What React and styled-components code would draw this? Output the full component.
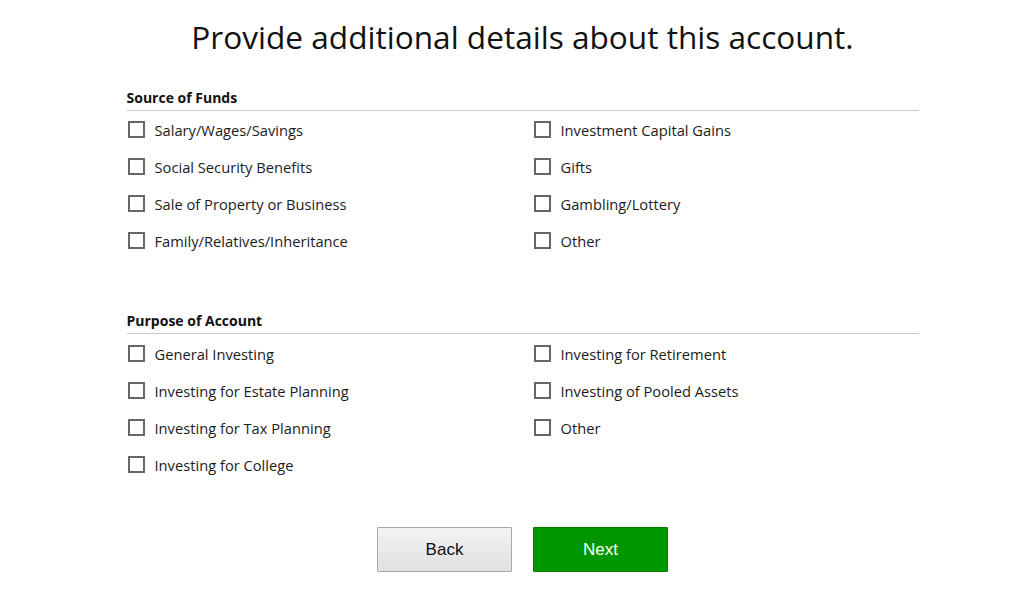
import React from "react"
import styled, { createGlobalStyle } from "styled-components"

const GlobalStyle = createGlobalStyle`
  body {
    margin: 0;
    background: #fff;
    font-family: "Open Sans", "Liberation Sans", sans-serif;
    color: #222;
  }
`

const Page = styled.div`
  width: 1033px;
  padding: 16px 0 0 12px;
  box-sizing: border-box;
  display: flex;
  flex-direction: column;
  align-items: center;
`

const Title = styled.h1`
  margin: 0;
  font-size: 31.6px;
  font-weight: 400;
  line-height: 42px;
  color: #111;
`

const Form = styled.div`
  width: 792px;
  margin-top: 30px;
`

const Section = styled.section`
  margin-bottom: ${p => p.$gap || 0}px;
`

const Heading = styled.h2`
  margin: 0;
  padding-bottom: 2px;
  font-size: 14px;
  font-weight: 700;
  line-height: 20px;
  color: #111;
  border-bottom: 1px solid #c8c8c8;
`

const Grid = styled.div`
  display: grid;
  grid-template-columns: 406px 1fr;
  grid-auto-flow: column;
  grid-template-rows: repeat(${p => p.$rows}, 37px);
  padding-top: ${p => p.$offset || 0}px;
`

const Option = styled.label`
  display: flex;
  align-items: center;
  gap: 10px;
  font-size: 14.7px;
  color: #1c1c1c;
  cursor: pointer;
`

const Box = styled.span`
  width: 13px;
  height: 13px;
  margin-left: 1px;
  border: 2px solid #666;
  background: #fff;
  flex: none;
`

const Buttons = styled.div`
  display: flex;
  justify-content: center;
  gap: 21px;
  margin-top: 44px;
`

const Button = styled.button`
  width: 135px;
  height: 45px;
  font-family: "Liberation Sans", Arial, sans-serif;
  font-size: 17px;
  border-radius: 1px;
  cursor: pointer;
  color: ${p => (p.$primary ? "#fff" : "#111")};
  background: ${p =>
    p.$primary ? "#009600" : "linear-gradient(#f3f3f3, #e0e0e0)"};
  border: 1px solid ${p => (p.$primary ? "#007d00" : "#a9a9a9")};
`

const funds = [
  "Salary/Wages/Savings",
  "Social Security Benefits",
  "Sale of Property or Business",
  "Family/Relatives/Inheritance",
  "Investment Capital Gains",
  "Gifts",
  "Gambling/Lottery",
  "Other",
]

const purposes = [
  "General Investing",
  "Investing for Estate Planning",
  "Investing for Tax Planning",
  "Investing for College",
  "Investing for Retirement",
  "Investing of Pooled Assets",
  "Other",
]

const App = () => (
  <Page>
    <GlobalStyle />
    <Title>Provide additional details about this account.</Title>
    <Form>
      <Section $gap={52}>
        <Heading>Source of Funds</Heading>
        <Grid $rows={4}>
          {funds.map((f, i) => (
            <Option key={i}>
              <Box />
              {f}
            </Option>
          ))}
        </Grid>
      </Section>
      <Section>
        <Heading>Purpose of Account</Heading>
        <Grid $rows={4} $offset={1}>
          {purposes.map((f, i) => (
            <Option key={i}>
              <Box />
              {f}
            </Option>
          ))}
        </Grid>
      </Section>
    </Form>
    <Buttons>
      <Button>Back</Button>
      <Button $primary>Next</Button>
    </Buttons>
  </Page>
)

export default App
